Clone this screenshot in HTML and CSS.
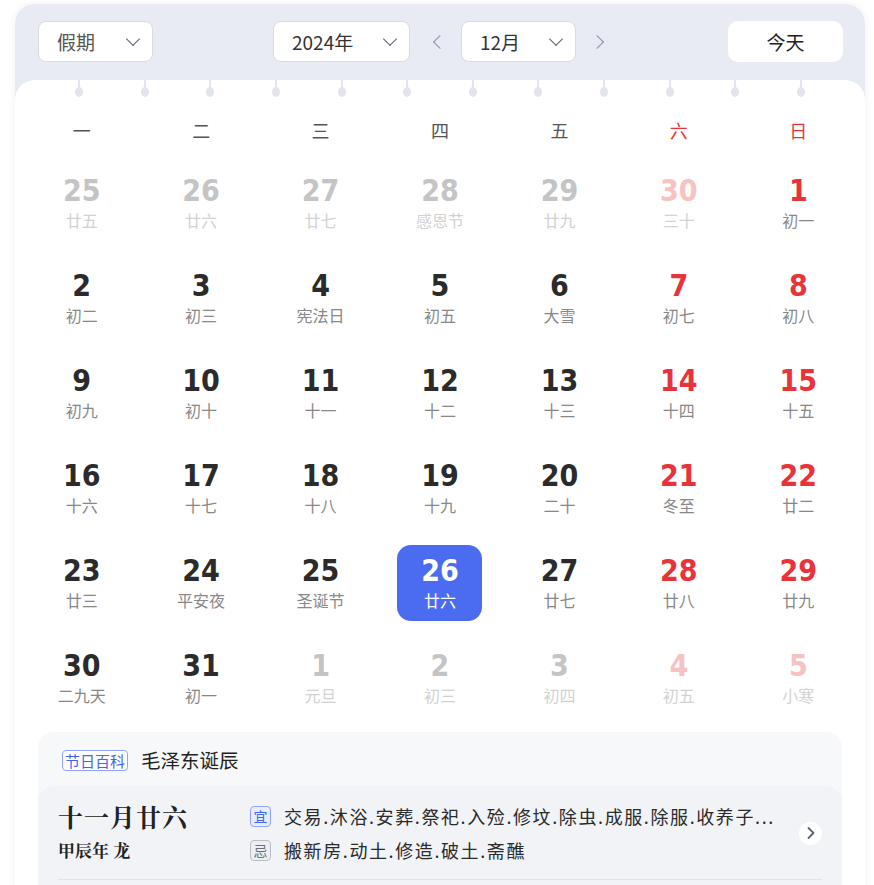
FILE: index.html
```html
<!DOCTYPE html>
<html>
<head>
  <meta charset="utf-8">
  <title>万年历</title>
  <link rel="stylesheet" href="styles.css">
</head>
<body>
<div class="calendar">
  <div class="toolbar">
    <div class="select select-holiday">假期<span class="caret"></span></div>
    <div class="month-nav">
      <div class="select select-year">2024年<span class="caret"></span></div>
      <span class="arrow arrow-left"></span>
      <div class="select select-month">12月<span class="caret"></span></div>
      <span class="arrow arrow-right"></span>
    </div>
    <button class="today-btn">今天</button>
  </div>

  <div class="sheet">
    <div class="rings">
      <i></i><i></i><i></i><i></i><i></i><i></i><i></i><i></i><i></i><i></i><i></i><i></i>
    </div>

    <div class="weekdays">
      <span>一</span><span>二</span><span>三</span><span>四</span><span>五</span>
      <span class="weekend">六</span><span class="weekend">日</span>
    </div>

    <div class="days">
      <div class="day other"><b>25</b><small>廿五</small></div>
      <div class="day other"><b>26</b><small>廿六</small></div>
      <div class="day other"><b>27</b><small>廿七</small></div>
      <div class="day other"><b>28</b><small>感恩节</small></div>
      <div class="day other"><b>29</b><small>廿九</small></div>
      <div class="day other weekend"><b>30</b><small>三十</small></div>
      <div class="day weekend"><b>1</b><small>初一</small></div>

      <div class="day"><b>2</b><small>初二</small></div>
      <div class="day"><b>3</b><small>初三</small></div>
      <div class="day"><b>4</b><small>宪法日</small></div>
      <div class="day"><b>5</b><small>初五</small></div>
      <div class="day"><b>6</b><small>大雪</small></div>
      <div class="day weekend"><b>7</b><small>初七</small></div>
      <div class="day weekend"><b>8</b><small>初八</small></div>

      <div class="day"><b>9</b><small>初九</small></div>
      <div class="day"><b>10</b><small>初十</small></div>
      <div class="day"><b>11</b><small>十一</small></div>
      <div class="day"><b>12</b><small>十二</small></div>
      <div class="day"><b>13</b><small>十三</small></div>
      <div class="day weekend"><b>14</b><small>十四</small></div>
      <div class="day weekend"><b>15</b><small>十五</small></div>

      <div class="day"><b>16</b><small>十六</small></div>
      <div class="day"><b>17</b><small>十七</small></div>
      <div class="day"><b>18</b><small>十八</small></div>
      <div class="day"><b>19</b><small>十九</small></div>
      <div class="day"><b>20</b><small>二十</small></div>
      <div class="day weekend"><b>21</b><small>冬至</small></div>
      <div class="day weekend"><b>22</b><small>廿二</small></div>

      <div class="day"><b>23</b><small>廿三</small></div>
      <div class="day"><b>24</b><small>平安夜</small></div>
      <div class="day"><b>25</b><small>圣诞节</small></div>
      <div class="day selected"><b>26</b><small>廿六</small></div>
      <div class="day"><b>27</b><small>廿七</small></div>
      <div class="day weekend"><b>28</b><small>廿八</small></div>
      <div class="day weekend"><b>29</b><small>廿九</small></div>

      <div class="day"><b>30</b><small>二九天</small></div>
      <div class="day"><b>31</b><small>初一</small></div>
      <div class="day other"><b>1</b><small>元旦</small></div>
      <div class="day other"><b>2</b><small>初三</small></div>
      <div class="day other"><b>3</b><small>初四</small></div>
      <div class="day other weekend"><b>4</b><small>初五</small></div>
      <div class="day other weekend"><b>5</b><small>小寒</small></div>
    </div>

    <div class="detail">
      <div class="festival">
        <span class="tag tag-blue">节日百科</span>
        <span class="festival-name">毛泽东诞辰</span>
      </div>
      <div class="almanac">
        <div class="almanac-row">
          <div class="lunar">
            <div class="lunar-date">十一月廿六</div>
            <div class="lunar-year">甲辰年 龙</div>
          </div>
          <div class="yiji">
            <div class="yiji-line"><span class="tag tag-yi">宜</span><span class="yiji-text">交易.沐浴.安葬.祭祀.入殓.修坟.除虫.成服.除服.收养子...</span></div>
            <div class="yiji-line"><span class="tag tag-ji">忌</span><span class="yiji-text">搬新房.动土.修造.破土.斋醮</span></div>
          </div>
          <span class="more-btn">
            <svg width="10" height="14" viewBox="0 0 10 14"><path d="M2.5 2 L7.5 7 L2.5 12" fill="none" stroke="#5a6478" stroke-width="1.8" stroke-linecap="round" stroke-linejoin="round"/></svg>
          </span>
        </div>
        <div class="almanac-divider"></div>
      </div>
    </div>
  </div>
</div>
</body>
</html>
```

FILE: styles.css
```css
body {
  margin: 0;
  background: #fff;
  font-family: "Noto Sans CJK SC", "Noto Sans", sans-serif;
  color: #333;
  overflow: hidden;
}
.calendar {
  width: 850px;
  margin: 4px 0 0 15px;
  background: #e8ebf3;
  border-radius: 20px 20px 0 0;
  box-shadow: 0 0 8px rgba(0,0,0,0.06);
}
.toolbar {
  display: flex;
  justify-content: space-between;
  align-items: center;
  padding: 17px 22px 18px 23px;
}
.month-nav {
  display: flex;
  align-items: center;
  margin-left: 12px;
}
.select {
  display: flex;
  align-items: center;
  justify-content: space-between;
  box-sizing: border-box;
  height: 41px;
  padding: 0 14px 0 18px;
  background: #fff;
  border: 1px solid #d8dbe3;
  border-radius: 8px;
  font-size: 19px;
  color: #333;
}
.select-holiday {
  width: 115px;
  color: #555;
}
.select-year {
  width: 137px;
}
.select-month {
  width: 115px;
}
.caret {
  width: 9px;
  height: 9px;
  border-right: 1.6px solid #5c6170;
  border-bottom: 1.6px solid #5c6170;
  transform: rotate(45deg);
  margin-top: -6px;
}
.arrow {
  width: 9px;
  height: 9px;
  border-left: 1.6px solid #8c909c;
  border-bottom: 1.6px solid #8c909c;
}
.arrow-left {
  transform: rotate(45deg);
  margin: 0 16px 0 25px;
}
.arrow-right {
  transform: rotate(-135deg);
  margin: 0 18px 0 16px;
}
.today-btn {
  width: 115px;
  height: 41px;
  border: none;
  border-radius: 10px;
  background: #fff;
  font-family: inherit;
  font-size: 19px;
  color: #222;
}

.sheet {
  background: #fff;
  border-radius: 20px 20px 0 0;
  padding: 0 7px;
  height: 820px;
}
.rings {
  display: flex;
  justify-content: space-between;
  padding: 0 53px;
  height: 20px;
}
.rings i {
  position: relative;
  width: 8px;
  height: 20px;
}
.rings i::before {
  content: "";
  position: absolute;
  left: 3px;
  top: 0;
  width: 2px;
  height: 10px;
  background: #e3e5ee;
}
.rings i::after {
  content: "";
  position: absolute;
  left: 0;
  top: 7px;
  width: 8px;
  height: 10px;
  border-radius: 50%;
  background: #e3e5ee;
}
.weekdays {
  display: grid;
  grid-template-columns: repeat(7, 1fr);
  margin-top: 15px;
  line-height: 30px;
  font-size: 18px;
  color: #555;
  text-align: center;
}
.weekdays .weekend {
  color: #e8333a;
}
.days {
  display: grid;
  grid-template-columns: repeat(7, 1fr);
  row-gap: 19px;
  margin-top: 20px;
}
.day {
  justify-self: center;
  box-sizing: border-box;
  width: 85px;
  height: 76px;
  padding-top: 8px;
  border-radius: 14px;
  display: flex;
  flex-direction: column;
  align-items: center;
}
.day b {
  font-family: "DejaVu Sans Condensed", "DejaVu Sans", sans-serif;
  font-stretch: condensed;
  font-weight: bold;
  font-size: 30px;
  line-height: 36px;
  color: #2b2b2b;
}
.day small {
  font-size: 16px;
  line-height: 22px;
  color: #888;
}
.day.weekend b {
  color: #e8333a;
}
.day.other b {
  color: #c4c4c4;
}
.day.other small {
  color: #d2d2d2;
}
.day.other.weekend b {
  color: #f7c2c2;
}
.day.selected {
  background: #4b6cf0;
}
.day.selected b,
.day.selected small {
  color: #fff;
}

.detail {
  margin: 16px 16px 0;
  background: #f7f8fa;
  border-radius: 16px;
  overflow: hidden;
}
.festival {
  display: flex;
  align-items: center;
  gap: 13px;
  height: 22px;
  padding: 17px 24px 15px;
}
.tag {
  display: inline-block;
  box-sizing: border-box;
  border-radius: 4px;
  font-size: 15px;
  line-height: 19px;
}
.tag-blue {
  padding: 0 2px;
  border: 1px solid #8fa2ff;
  color: #4464f0;
  background: #fff;
}
.festival-name {
  font-size: 19.5px;
  line-height: 22px;
  color: #222;
}
.almanac {
  background: #f1f3f7;
  border-radius: 16px 16px 0 0;
  padding: 13px 20px 40px;
}
.almanac-row {
  display: flex;
  align-items: center;
}
.lunar {
  width: 192px;
  flex-shrink: 0;
  font-family: "Noto Serif CJK SC", "Noto Sans CJK SC", serif;
  font-weight: bold;
  color: #222;
}
.lunar-date {
  font-size: 25px;
  line-height: 34px;
  letter-spacing: 1px;
}
.lunar-year {
  font-size: 17px;
  line-height: 34px;
}
.yiji {
  flex: 1;
  min-width: 0;
}
.yiji-line {
  display: flex;
  align-items: center;
  height: 34px;
}
.yiji-text {
  margin-left: 13px;
  font-size: 18px;
  letter-spacing: 1.6px;
  color: #2a2a2a;
  white-space: nowrap;
}
.tag-yi,
.tag-ji {
  width: 21px;
  height: 21px;
  font-size: 14px;
  line-height: 19px;
  text-align: center;
}
.tag-yi {
  border: 1px solid #8fa2ff;
  color: #4464f0;
  background: #e9eefe;
}
.tag-ji {
  border: 1px solid #b9bdc8;
  color: #6a6f7c;
  background: #eceef3;
}
.more-btn {
  flex-shrink: 0;
  display: flex;
  align-items: center;
  justify-content: center;
  width: 23px;
  height: 23px;
  margin-left: 20px;
  border-radius: 50%;
  background: #fff;
}
.almanac-divider {
  height: 1px;
  margin-top: 12px;
  background: #e2e4ea;
}
```
